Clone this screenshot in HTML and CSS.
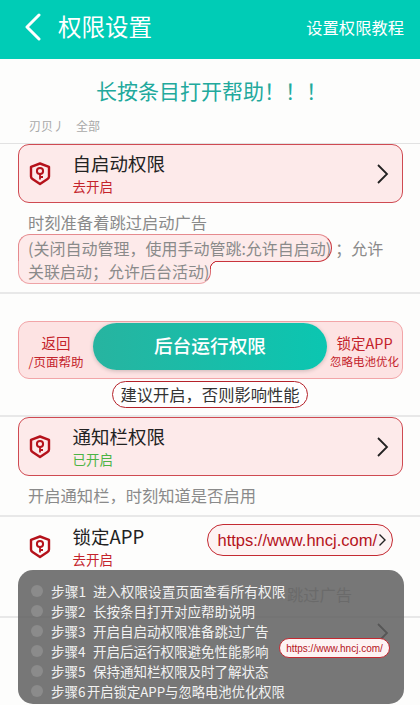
FILE: index.html
```html
<!DOCTYPE html>
<html lang="zh-CN">

<head>
	<meta charset="UTF-8">
	<title>权限设置</title>
	<meta name="viewport" content="width=device-width">
	<link rel="stylesheet" href="styles.css">
</head>

<body>
	<div class="page">
		<header class="topbar">
			<svg class="back" width="18" height="28" viewBox="0 0 18 28">
				<path d="M15 2 L3 14 L15 26" fill="none" stroke="#fff" stroke-width="3" stroke-linecap="round" stroke-linejoin="round" />
			</svg>
			<h1>权限设置</h1>
			<span class="tutorial">设置权限教程</span>
		</header>

		<div class="notice">长按条目打开帮助！！！</div>
		<div class="crumbs"><span>刃贝丿</span><span>全部</span></div>

		<section class="item">
			<div class="card">
				<svg class="shield" width="22" height="24" viewBox="0 0 22 24">
					<path d="M11 1.5 L20 4.8 V14.5 Q20 16 18.5 17 L11 22 L3.5 17 Q2 16 2 14.5 V4.8 Z" fill="none" stroke="#b5121b" stroke-width="2.4" stroke-linejoin="round" />
					<circle cx="11" cy="9" r="3.1" fill="none" stroke="#b5121b" stroke-width="2" />
					<path d="M11 12 V17.5 M11 15 H14" fill="none" stroke="#b5121b" stroke-width="1.8" />
				</svg>
				<div class="card-text">
					<div class="card-title">自启动权限</div>
					<div class="state off">去开启</div>
				</div>
				<svg class="arrow" width="14" height="20" viewBox="0 0 14 20">
					<path d="M2 1 L11 10 L2 19" fill="none" stroke="#222" stroke-width="1.8" />
				</svg>
			</div>
			<div class="desc first">时刻准备着跳过启动广告</div>
			<div class="desc-mark">
				<span class="mark-a">(关闭自动管理，使用手动管跳:允许自启动)</span>
				<span class="desc-rest">；允许</span>
				<span class="mark-b">关联启动；允许后台活动)</span>
			</div>
		</section>

		<section class="item run">
			<div class="run-box">
				<div class="run-side left">
					<div class="run-big">返回</div>
					<div class="run-small">/页面帮助</div>
				</div>
				<div class="run-btn">后台运行权限</div>
				<div class="run-side right">
					<div class="run-big">锁定APP</div>
					<div class="run-small">忽略电池优化</div>
				</div>
			</div>
			<div class="advice-wrap"><span class="advice">建议开启，否则影响性能</span></div>
		</section>

		<section class="item">
			<div class="card">
				<svg class="shield" width="22" height="24" viewBox="0 0 22 24">
					<path d="M11 1.5 L20 4.8 V14.5 Q20 16 18.5 17 L11 22 L3.5 17 Q2 16 2 14.5 V4.8 Z" fill="none" stroke="#b5121b" stroke-width="2.4" stroke-linejoin="round" />
					<circle cx="11" cy="9" r="3.1" fill="none" stroke="#b5121b" stroke-width="2" />
					<path d="M11 12 V17.5 M11 15 H14" fill="none" stroke="#b5121b" stroke-width="1.8" />
				</svg>
				<div class="card-text">
					<div class="card-title">通知栏权限</div>
					<div class="state on">已开启</div>
				</div>
				<svg class="arrow" width="14" height="20" viewBox="0 0 14 20">
					<path d="M2 1 L11 10 L2 19" fill="none" stroke="#222" stroke-width="1.8" />
				</svg>
			</div>
			<div class="desc single">开启通知栏，时刻知道是否启用</div>
		</section>

		<section class="item">
			<div class="card plain">
				<svg class="shield" width="22" height="24" viewBox="0 0 22 24">
					<path d="M11 1.5 L20 4.8 V14.5 Q20 16 18.5 17 L11 22 L3.5 17 Q2 16 2 14.5 V4.8 Z" fill="none" stroke="#b5121b" stroke-width="2.4" stroke-linejoin="round" />
					<circle cx="11" cy="9" r="3.1" fill="none" stroke="#b5121b" stroke-width="2" />
					<path d="M11 12 V17.5 M11 15 H14" fill="none" stroke="#b5121b" stroke-width="1.8" />
				</svg>
				<div class="card-text">
					<div class="card-title">锁定APP</div>
					<div class="state off">去开启</div>
				</div>
			</div>
			<div class="desc behind">跳过广告</div>
		</section>

		<div class="next-row">
			<svg class="arrow" width="14" height="20" viewBox="0 0 14 20">
				<path d="M2 1 L11 10 L2 19" fill="none" stroke="#222" stroke-width="1.8" />
			</svg>
		</div>

		<div class="url-pill big">
			<span>https://www.hncj.com/</span>
			<svg width="9" height="14" viewBox="0 0 9 14">
				<path d="M1.5 1.5 L7 7 L1.5 12.5" fill="none" stroke="#222" stroke-width="1.4" />
			</svg>
		</div>

		<!-- steps popup over the list -->
		<div class="steps">
			<div class="step wide"><i></i><span class="num">步骤1</span><span>进入权限设置页面查看所有权限</span></div>
			<div class="step"><i></i><span class="num">步骤2</span><span>长按条目打开对应帮助说明</span></div>
			<div class="step"><i></i><span class="num">步骤3</span><span>开启自启动权限准备跳过广告</span></div>
			<div class="step"><i></i><span class="num">步骤4</span><span>开启后运行权限避免性能影响</span></div>
			<div class="step"><i></i><span class="num">步骤5</span><span>保持通知栏权限及时了解状态</span></div>
			<div class="step"><i></i><span class="num tight">步骤6</span><span class="squeeze">开启锁定APP与忽略电池优化权限</span></div>
		</div>
		<div class="url-pill small">https://www.hncj.com/</div>
	</div>
</body>

</html>
```

FILE: styles.css
```css
* {
	box-sizing: border-box;
}

body {
	margin: 0;
	background: #fff;
	font-family: "Noto Sans CJK SC", "Liberation Sans", sans-serif;
}

.page {
	position: relative;
	width: 420px;
	height: 705px;
	overflow: hidden;
	background: #fdfdfc;
}

.topbar {
	display: flex;
	align-items: center;
	height: 59px;
	padding: 0 16px 5px 24px;
	background: #00ccb6;
	color: #fff;
}

.topbar h1 {
	margin: 0 0 0 16px;
	font-size: 23.5px;
	font-weight: 400;
	line-height: 1;
}

.tutorial {
	margin-left: auto;
	font-size: 16.3px;
}

.notice {
	padding-top: 19px;
	padding-left: 96px;
	height: 53px;
	font-size: 21px;
	line-height: 24px;
	color: #22a99c;
}

.crumbs {
	display: flex;
	gap: 11px;
	height: 32px;
	padding: 5px 0 0 29px;
	font-size: 12px;
	line-height: 17px;
	color: #a9a9a9;
	border-bottom: 1px solid #e2e2e2;
}

.item {
	border-bottom: 2px solid #e8e8e8;
}

.card {
	display: flex;
	align-items: center;
	height: 59px;
	margin: 0 17px 0 18px;
	padding-left: 10px;
	background: #fdeaea;
	border: 1.5px solid #cf4a52;
	border-radius: 11px;
}

.card.plain {
	background: none;
	border-color: transparent;
}

.shield {
	flex: none;
}

.card-text {
	margin: -2px 0 0 21.5px;
}

.card-title {
	font-size: 18.5px;
	line-height: 24px;
	color: #222;
}

.state {
	margin-top: 2px;
	font-size: 13.5px;
	line-height: 18px;
}

.state.off {
	color: #c4232b;
}

.state.on {
	color: #4cb344;
}

.arrow {
	margin-left: auto;
	margin-right: 12px;
}

.desc {
	padding-left: 28px;
	font-size: 16.3px;
	line-height: 24px;
	color: #8a8a8a;
}

.desc.first {
	height: 32px;
	padding-top: 7px;
}

.desc.single {
	height: 39px;
	padding-top: 7px;
}

.desc.behind {
	height: 40px;
	padding: 6px 0 0 287px;
	color: #aaa;
}

.desc-mark {
	display: grid;
	grid-template-columns: auto 1fr;
	justify-items: start;
	margin: -1px 0 8px 18px;
	font-size: 16px;
	line-height: 24px;
	color: #8a8a8a;
	white-space: nowrap;
}

.mark-a {
	height: 28px;
	padding: 1px 0 0 9px;
	background: #fdeaea;
	border: 1px solid #e58a8e;
	border-right-color: #c9343c;
	border-bottom-color: #c9343c;
	border-radius: 12px 14px 14px 0;
}

.desc-rest {
	padding: 2px 0 0 3px;
}

.mark-b {
	position: relative;
	z-index: 1;
	height: 23px;
	margin-top: -1px;
	padding: 0 1px 0 9px;
	line-height: 21px;
	background: #fdeaea;
	border: 1px solid #eea3a6;
	border-top: 0;
	border-right-color: #dc6a70;
	border-radius: 0 0 12px 12px;
}

/* curve from the lower bubble back into the upper one */
.mark-b::after {
	content: "";
	position: absolute;
	left: 100%;
	top: 0;
	width: 8px;
	height: 8px;
	background: radial-gradient(circle at 100% 100%, #fdfdfc 7px, #c9343c 7.5px, #c9343c 8px, #fdeaea 8.5px);
}

.run {
	height: 123px;
	padding-top: 27px;
}

.run-box {
	display: flex;
	align-items: center;
	height: 58px;
	margin: 0 17px 0 18px;
	padding-top: 3px;
	background: #fde3e3;
	border: 1px solid #f2a5a8;
	border-radius: 11px;
}

.run-side {
	text-align: center;
	color: #c4232b;
}

.run-side.left {
	width: 74px;
}

.run-side.right {
	flex: 1;
}

.run-big {
	font-size: 14.5px;
	line-height: 19px;
}

.run-small {
	font-size: 11.5px;
	line-height: 19px;
}

.left .run-small {
	font-size: 12.5px;
}

.run-btn {
	align-self: flex-start;
	width: 234px;
	height: 47px;
	margin-top: -2px;
	border-radius: 24px;
	background: linear-gradient(90deg, #27b4a0, #0bc6b1);
	box-shadow: 0 1px 4px rgba(0, 0, 0, 0.2);
	color: #fff;
	font-size: 18.7px;
	font-weight: 500;
	line-height: 44px;
	text-align: center;
}

.advice-wrap {
	margin-top: 2px;
	text-align: center;
}

.advice {
	display: inline-block;
	height: 27px;
	padding: 0 7px;
	font-size: 16.3px;
	line-height: 24px;
	color: #333;
	background: #fff;
	border: 1.5px solid #b5222a;
	border-radius: 14px;
}

.next-row {
	display: flex;
	padding: 5px 18px 0 0;
}

.url-pill {
	position: absolute;
	display: flex;
	align-items: center;
	white-space: nowrap;
	font-family: "Liberation Sans", sans-serif;
	color: #b5121b;
	background: #fdf3f3;
	border: 1.5px solid #c42a32;
}

.url-pill.big {
	left: 207px;
	top: 524px;
	width: 186px;
	height: 32px;
	padding-left: 9.5px;
	gap: 1px;
	border-radius: 16px;
	font-size: 16.5px;
}

.url-pill.small {
	left: 279px;
	top: 638px;
	width: 111px;
	height: 20px;
	justify-content: center;
	border-radius: 10px;
	font-size: 10px;
}

.steps {
	position: absolute;
	left: 18px;
	top: 570px;
	width: 386px;
	height: 134px;
	padding: 11px 0 0 13px;
	background: rgba(95, 95, 95, 0.85);
	border-radius: 15px;
}

.step {
	display: flex;
	align-items: center;
	height: 20px;
	color: #f2f2f2;
	font-size: 13.5px;
	white-space: nowrap;
}

.step.wide {
	font-size: 13.75px;
}

.step i {
	flex: none;
	width: 12px;
	height: 12px;
	margin-right: 8px;
	border-radius: 50%;
	background: #8b8b8b;
}

.step .num {
	width: 42px;
}

.step .num.tight {
	width: 36px;
}

.step .squeeze {
	font-size: 13.3px;
}
```
